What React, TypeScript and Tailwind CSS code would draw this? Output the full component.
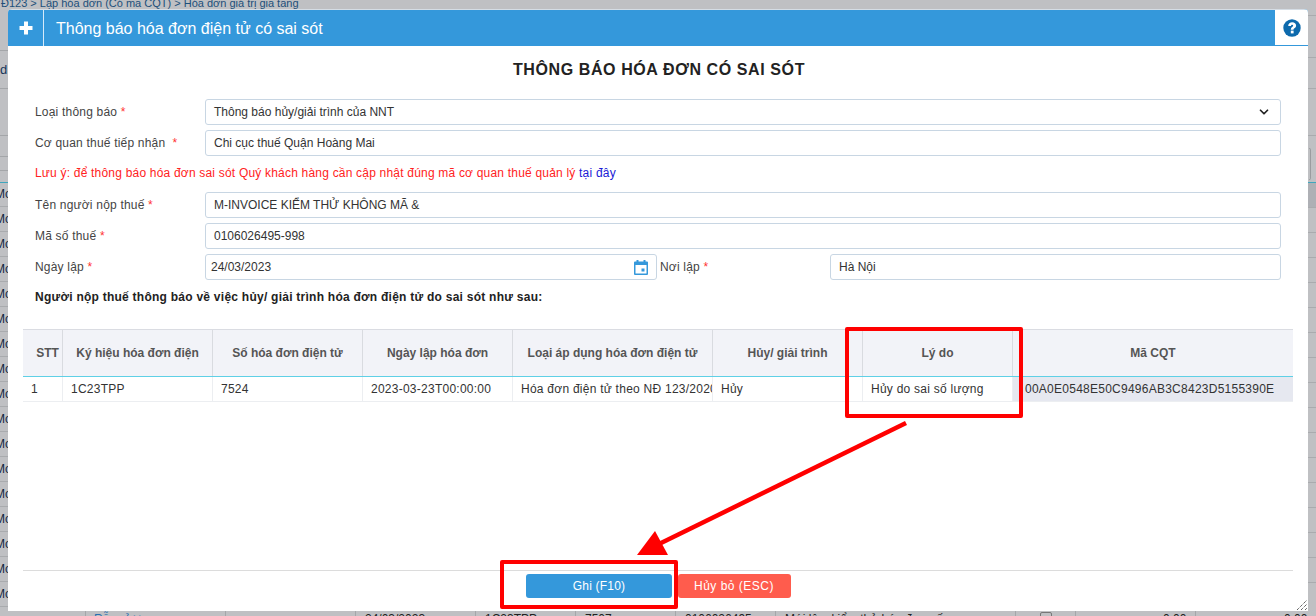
import { ChevronDown } from "lucide-react";

const font = "[font-family:'Liberation_Sans',Arial,sans-serif]";
const inputCls =
  "h-[26px] rounded-[3px] border border-[#c8d6e3] bg-white flex items-center text-[12px] text-[#333]";
const leftRows = Array.from({ length: 17 }, (_, i) => 182 + i * 25);
const leftLines = [50, 88, 135, 156, 170];
const rightLines = [15, 57, 88, 135, 207, 232, 257, 282, 307, 332, 357, 382, 407, 432, 457, 482, 507, 532, 557, 582];
const bottomLines = [85, 225, 355, 475, 575, 675, 775, 1015, 1075, 1195];
const cols = [
  { w: "w-[40px]", h: "STT", c: "1", cc: "pl-[8px]", hc: "pl-[10px]" },
  { w: "w-[150px]", h: "Ký hiệu hóa đơn điện", c: "1C23TPP", cc: "pl-[8px]", hc: "" },
  { w: "w-[150px]", h: "Số hóa đơn điện tử", c: "7524", cc: "pl-[8px]", hc: "" },
  { w: "w-[150px]", h: "Ngày lập hóa đơn", c: "2023-03-23T00:00:00", cc: "pl-[8px]", hc: "" },
  { w: "w-[200px]", h: "Loại áp dụng hóa đơn điện tử", c: "Hóa đơn điện tử theo NĐ 123/2020", cc: "pl-[8px]", hc: "" },
  { w: "w-[150px]", h: "Hủy/ giải trình", c: "Hủy", cc: "pl-[8px]", hc: "" },
  { w: "w-[150px]", h: "Lý do", c: "Hủy do sai số lượng", cc: "pl-[8px]", hc: "" },
];

function Star() {
  return <span className="text-[#f33]"> *</span>;
}

function Row({ label, children, wide = false }: { label: string; children: React.ReactNode; wide?: boolean }) {
  return (
    <div className="flex">
      <div className="flex w-[170px] items-center text-[12px] tracking-[0.2px] text-[#444]">
        <span>{label}{wide && "\u00a0"}<Star /></span>
      </div>
      <div className="flex-1">{children}</div>
    </div>
  );
}

export default function App() {
  return (
    <div className={`${font} relative h-[616px] w-[1316px] overflow-hidden bg-[#bfc0c3]`}>
      {/* page behind the dialog */}
      <div className="absolute left-0 top-[-4px] pl-[1px] text-[11px] leading-[14px] text-[#1d4f7a] whitespace-nowrap">Đ123 &gt; Lập hóa đơn (Có mã CQT) &gt; Hóa đơn giá trị gia tăng</div>
      <div className="absolute left-0 top-[60px] text-[13px] text-[#16345a]">d</div>
      {leftLines.map((y) => (
        <div key={y} className="absolute left-0 h-px w-[8px] bg-[#a4a6a9]" style={{ top: y }} />
      ))}
      <div className="absolute left-0 top-[182px] h-px w-[8px] bg-[#3fa6bd]" />
      {leftRows.map((y) => (
        <div key={y} className="absolute left-0 h-[25px] w-[8px] overflow-hidden border-b border-[#a9abae] text-[12px] leading-[25px] text-[#12263f]" style={{ top: y }}>
          <span className="ml-[-5px] whitespace-nowrap">Mo</span>
        </div>
      ))}
      {rightLines.map((y) => (
        <div key={y} className="absolute left-[1308px] h-px w-[8px] bg-[#a9abae]" style={{ top: y }} />
      ))}
      <div className="absolute left-[1308px] top-[182px] h-px w-[8px] bg-[#3fa6bd]" />
      <div className="absolute left-[1308px] top-[183px] h-[24px] w-[8px] bg-[#aeb0b5]" />
      <div className="absolute left-[1309px] top-[148px] h-[32px] w-[2px] rounded-r-[2px] border border-l-0 border-[#9a9c9f]" />
      <div className="absolute left-0 top-[611px] h-[5px] w-full overflow-hidden text-[12px] leading-[14px] text-[#222] whitespace-nowrap">
        {bottomLines.map((x) => (
          <div key={x} className="absolute top-0 h-[5px] w-px bg-[#a4a6a9]" style={{ left: x }} />
        ))}
        <span className="absolute left-[94px] top-[1px] text-[#2a6fb0]">Rỗng ỉ ✕</span>
        <span className="absolute left-[365px] top-[1px]">24/03/2023</span>
        <span className="absolute left-[485px] top-[1px]">1C23TPP</span>
        <span className="absolute left-[585px] top-[1px]">7507</span>
        <span className="absolute left-[685px] top-[1px]">0106026495</span>
        <span className="absolute left-[785px] top-[1px]">Mới lập, kiểm thử hóa đơn gốc</span>
        <span className="absolute left-[1040px] top-[1px] h-[10px] w-[12px] rounded-[2px] border border-[#777]" />
        <span className="absolute left-[1163px] top-[1px]">0,00</span>
        <span className="absolute left-[1284px] top-[1px]">0,00</span>
      </div>

      {/* dialog */}
      <div className="absolute left-[8px] top-[9px] flex h-[602px] w-[1300px] flex-col overflow-hidden rounded-t-[4px] bg-white">
        <div className="flex h-[37px] border-t border-[#d5dde5] bg-[#3498db] text-white">
          <div className="box-content flex w-[35px] items-center justify-center border-r border-[#d6eafa]">
            <svg width="14" height="14" viewBox="0 0 14 14" aria-hidden="true">
              <path d="M5 0.5h4v4.5h4.5v4H9v4.5H5V9H0.5V5H5z" fill="#fff" />
            </svg>
          </div>
          <div className="flex-1 pl-[12px] text-[16px] leading-[38px]">Thông báo hóa đơn điện tử có sai sót</div>
          <div className="flex w-[33px] items-center justify-center border-b border-[#3498db] bg-white">
            <svg width="18" height="18" viewBox="0 0 18 18" aria-hidden="true">
              <circle cx="9" cy="9" r="8.7" fill="#0d6aad" />
              <path d="M5.2 7C5.3 4.6 7 3.3 9.2 3.3c2.3 0 3.9 1.3 3.9 3.2 0 1.4-.8 2.1-1.6 2.7-.8.5-1 .9-1 1.6H7.8c0-1.4.4-2.2 1.4-2.9.6-.4 1-.8 1-1.3 0-.6-.4-.9-1-.9-.7 0-1.1.4-1.2 1.3z" fill="#fff" />
              <rect x="7.8" y="11.6" width="2.8" height="2.8" fill="#fff" />
            </svg>
          </div>
        </div>

        <div className="flex flex-1 flex-col">
          <h1 className="mt-[14px] h-[20px] pl-[2px] text-center text-[16px] leading-[20px] font-bold tracking-[0.6px] text-[#222]">THÔNG BÁO HÓA ĐƠN CÓ SAI SÓT</h1>

          <div className="mt-[19px] ml-[27px] mr-[27px] flex flex-col gap-[5px]">
            <Row label="Loại thông báo">
              <div className={`${inputCls} justify-between pl-[8px] pr-[9px]`}>
                <span>Thông báo hủy/giải trình của NNT</span>
                <ChevronDown size={14} strokeWidth={3} className="text-[#222]" />
              </div>
            </Row>
            <Row label="Cơ quan thuế tiếp nhận" wide>
              <div className={`${inputCls} pl-[8px]`}>Chi cục thuế Quận Hoàng Mai</div>
            </Row>
          </div>
          <div className="ml-[27px] mt-[10px] h-[14px] text-[12px] leading-[14px] tracking-[0.2px] text-[#f22]">
            Lưu ý: để thông báo hóa đơn sai sót Quý khách hàng cần cập nhật đúng mã cơ quan thuế quản lý <span className="text-[#1a1ad6]">tại đây</span>
          </div>
          <div className="mt-[12px] ml-[27px] mr-[27px] flex flex-col gap-[5px]">
            <Row label="Tên người nộp thuế">
              <div className={`${inputCls} pl-[8px]`}>M-INVOICE KIỂM THỬ KHÔNG MÃ &amp;</div>
            </Row>
            <Row label="Mã số thuế">
              <div className={`${inputCls} pl-[8px]`}>0106026495-998</div>
            </Row>
            <div className="flex">
              <div className="flex w-[170px] items-center text-[12px] tracking-[0.2px] text-[#444]"><span>Ngày lập<Star /></span></div>
              <div className={`${inputCls} w-[452px] justify-between pl-[5px] pr-[8px]`}>
                <span>24/03/2023</span>
                <svg width="14" height="15" viewBox="0 0 14 15" aria-hidden="true">
                  <path d="M2.5 0h2v1.5h5V0h2v1.5H13a1 1 0 0 1 1 1V14a1 1 0 0 1-1 1H1a1 1 0 0 1-1-1V2.500a1 1 0 0 1 1-1h1.500z" fill="#3498db" />
                  <rect x="1.500" y="5" width="11" height="8.500" fill="#fff" />
                  <rect x="7.500" y="8.500" width="3" height="3" fill="#3498db" />
                </svg>
              </div>
              <div className="flex w-[173px] items-center pl-[3px] text-[12px] tracking-[0.2px] text-[#444]"><span>Nơi lập<Star /></span></div>
              <div className={`${inputCls} flex-1 pl-[8px]`}>Hà Nội</div>
            </div>
          </div>
          <div className="ml-[27px] mt-[10px] h-[14px] text-[12px] leading-[14px] font-bold tracking-[0.25px] text-[#222]">
            Người nộp thuế thông báo về việc hủy/ giải trình hóa đơn điện tử do sai sót như sau:
          </div>

          <div className="mx-[15px] mt-[25px] w-[1270px]">
            <div className="flex h-[48px] border-y border-t-[#dadce2] border-b-[#5fd0e6] bg-[#f2f3f8] text-[12px] font-bold text-[#555]">
              {cols.map((c) => (
                <div key={c.h} className={`${c.w} ${c.hc} flex items-center justify-center overflow-hidden border-r border-[#d9dbe0] whitespace-nowrap`}>{c.h}</div>
              ))}
              <div className="flex flex-1 items-center justify-center">Mã CQT</div>
            </div>
            <div className="flex h-[25px] border-b border-[#eceef1] text-[12px] tracking-[0.25px] text-[#333]">
              {cols.map((c) => (
                <div key={c.h} className={`${c.w} ${c.cc} flex items-center overflow-hidden border-r border-[#eceef1] whitespace-nowrap`}>{c.c}</div>
              ))}
              <div className="flex flex-1 items-center bg-[#e6e8f0] pl-[12px] whitespace-nowrap">00A0E0548E50C9496AB3C8423D5155390E</div>
            </div>
          </div>

          <div className="mx-[15px] mt-auto flex h-[41px] w-[1270px] justify-center gap-[6px] border-t border-[#dcdcdc] pt-[3px] pl-[3px] text-[12px] text-white">
            <button className="ml-[-3px] h-[24px] w-[146px] rounded-[3px] bg-[#3498db] pl-[1px] tracking-[0.2px]">Ghi (F10)</button>
            <button className="h-[24px] w-[113px] rounded-[3px] bg-[#ff5c4d] tracking-[0.5px]">Hủy bỏ (ESC)</button>
          </div>
        </div>

        <svg className="absolute right-0 bottom-0" width="12" height="12" viewBox="0 0 12 12" aria-hidden="true">
          <path d="M1 11L11 1M5 11l6-6M9 11l2-2" stroke="#222" strokeWidth="1" strokeDasharray="1 1" />
        </svg>
      </div>

      {/* annotations */}
      <div className="absolute left-[845px] top-[327px] h-[91px] w-[178px] rounded-[2px] border-[4px] border-[#f00]" />
      <div className="absolute left-[500px] top-[560px] h-[49px] w-[178px] rounded-[2px] border-[4px] border-[#f00]" />
      <svg className="absolute left-0 top-0" width="1316" height="616" viewBox="0 0 1316 616" aria-hidden="true">
        <path d="M906 423L659 544" stroke="#f00" strokeWidth="4.5" />
        <path d="M655 531L637 555H668z" fill="#f00" />
      </svg>
    </div>
  );
}
